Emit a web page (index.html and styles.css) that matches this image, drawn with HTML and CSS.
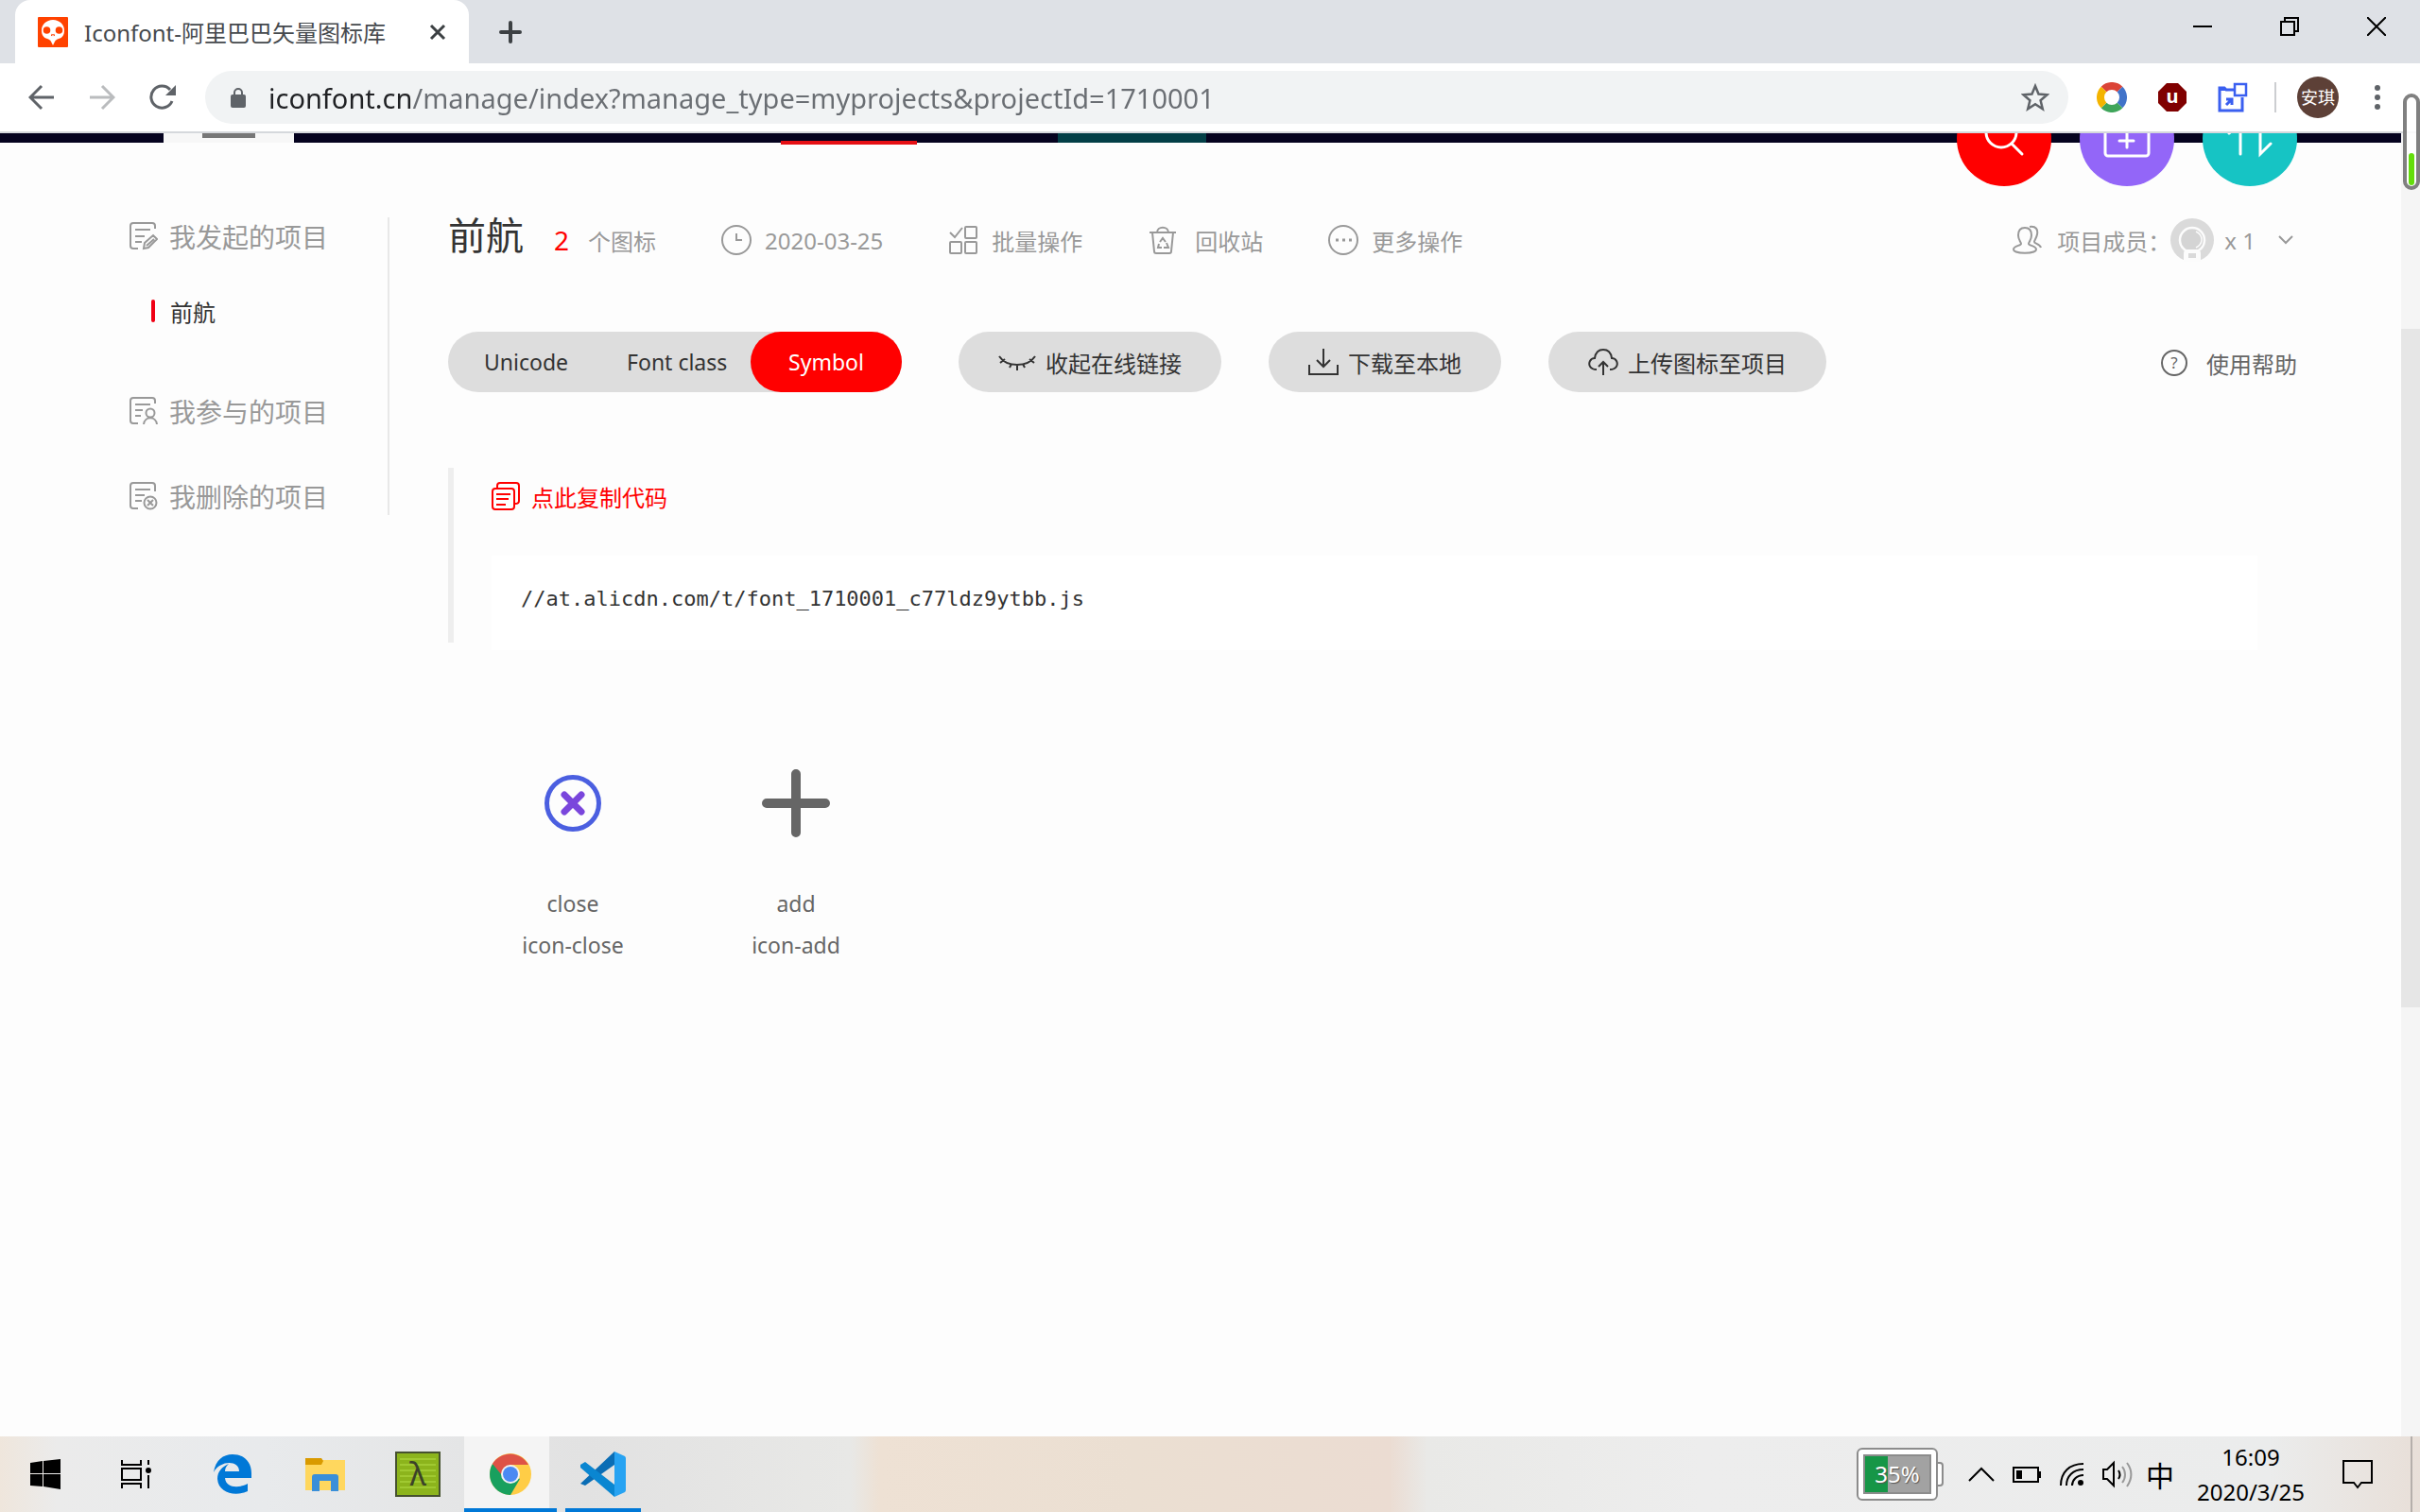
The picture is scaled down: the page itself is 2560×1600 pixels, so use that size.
FILE: index.html
```html
<!DOCTYPE html>
<html lang="zh-CN">
<head>
    <meta charset="UTF-8">
    <title>Iconfont-阿里巴巴矢量图标库</title>
    <link rel="stylesheet" href="styles.css">
</head>
<body>
    <!-- Browser tabs -->
    <div class="tab-strip">
        <div class="tab">
            <svg class="favicon" viewBox="0 0 32 32">
                <rect width="32" height="32" rx="1" fill="#ff4200"/>
                <path d="M16 3C9 3 4 8 4 14c0 5 2 8 6 9 2 1 3 1 4 3l2 4 2-4c1-2 2-2 4-3 4-1 6-4 6-9 0-6-5-11-12-11z" fill="#fff"/>
                <circle cx="9.500" cy="14" r="3.800" fill="#ff4200"/>
                <circle cx="22.500" cy="14" r="3.800" fill="#ff4200"/>
                <path d="M14.500 20l.8-2M17.500 20l-.8-2" stroke="#ff4200" stroke-width="1.300"/>
            </svg>
            <span class="tab-title">Iconfont-阿里巴巴矢量图标库</span>
            <button class="tab-close" aria-label="关闭标签页">
                <svg viewBox="0 0 18 18"><path d="M2 2l14 14M16 2L2 16" stroke="#3c4043" stroke-width="3"/></svg>
            </button>
        </div>
        <button class="new-tab" aria-label="新标签页">
            <svg viewBox="0 0 24 24"><path d="M12 2v20M2 12h20" stroke="#3c4043" stroke-width="4" stroke-linecap="round"/></svg>
        </button>
        <div class="window-controls">
            <button aria-label="最小化"><svg viewBox="0 0 20 20"><path d="M0 10h20" stroke="#000" stroke-width="2"/></svg></button>
            <button aria-label="还原"><svg viewBox="0 0 20 20"><path d="M1 5h14v14H1zM5 5V1h14v14h-4" fill="none" stroke="#000" stroke-width="2"/></svg></button>
            <button aria-label="关闭"><svg viewBox="0 0 20 20"><path d="M0 0l20 20M20 0L0 20" stroke="#000" stroke-width="2"/></svg></button>
        </div>
    </div>

    <!-- Address bar -->
    <div class="toolbar">
        <div class="nav-buttons">
            <button aria-label="后退"><svg viewBox="0 0 28 28"><path d="M27 14H3M14 2L2 14l12 12" fill="none" stroke="#5f6368" stroke-width="3"/></svg></button>
            <button aria-label="前进"><svg viewBox="0 0 28 28"><path d="M1 14h24M14 2l12 12-12 12" fill="none" stroke="#babcbe" stroke-width="3"/></svg></button>
            <button aria-label="重新加载"><svg viewBox="0 0 28 28"><path d="M24 18A11.500 11.500 0 1 1 22 6" fill="none" stroke="#5f6368" stroke-width="3"/><path d="M28 1v11H17z" fill="#5f6368"/></svg></button>
        </div>
        <div class="address">
            <svg class="lock" viewBox="0 0 16 22"><rect y="8" width="16" height="14" rx="2" fill="#5f6368"/><path d="M4 9V6a4 4 0 0 1 8 0v3" fill="none" stroke="#5f6368" stroke-width="2"/></svg>
            <input class="url" type="text" aria-label="地址栏" spellcheck="false" value="iconfont.cn/manage/index?manage_type=myprojects&amp;projectId=1710001">
            <button class="star" aria-label="收藏"><svg viewBox="0 0 30 30"><path d="M15 3l3.500 8.500 9 .7-6.900 6 2.200 9L15 22.300 7.200 27.200l2.200-9-6.900-6 9-.7z" fill="none" stroke="#5f6368" stroke-width="2.500"/></svg></button>
        </div>
        <div class="extensions">
            <button aria-label="扩展程序">
                <svg viewBox="0 0 32 32" fill="none" stroke-width="8">
                    <path d="M7.500 7.500a12 12 0 0 1 17 0" stroke="#db4437"/>
                    <path d="M24.500 7.500a12 12 0 0 1 0 17" stroke="#4173c9"/>
                    <path d="M24.500 24.500a12 12 0 0 1-17 0" stroke="#3fa55a"/>
                    <path d="M7.500 24.500a12 12 0 0 1 0-17" stroke="#f4b400"/>
                </svg>
            </button>
            <button class="ublock" aria-label="uBlock">
                <svg viewBox="0 0 32 32"><path d="M10 1h12l9 9v12l-9 9H10l-9-9V10z" fill="#800000"/><text x="16" y="22" text-anchor="middle">u</text></svg>
            </button>
            <button aria-label="打开窗口">
                <svg viewBox="0 0 32 32"><path d="M17 8H9L7 6H2v24h24V16" fill="none" stroke="#3a5ff0" stroke-width="3"/><path d="M1 6h7l2 3H1z" fill="#3a5ff0"/><path d="M18 2h12v12H18z" fill="#fff" stroke="#3a5ff0" stroke-width="2.500"/><path d="M9 24l6-6M9 18h6v6" fill="none" stroke="#3a5ff0" stroke-width="3"/></svg>
            </button>
        </div>
        <div class="divider"></div>
        <button class="profile">安琪</button>
        <button class="menu" aria-label="菜单"><svg viewBox="0 0 6 28" fill="#5f6368"><circle cx="3" cy="4" r="3"/><circle cx="3" cy="14" r="3"/><circle cx="3" cy="24" r="3"/></svg></button>
    </div>

    <!-- Page -->
    <div class="viewport">
        <div class="banner">
            <span class="banner-search"></span>
            <span class="banner-active"></span>
            <span class="banner-teal"></span>
        </div>
        <div class="round-actions">
            <button class="round red" aria-label="搜索"><svg viewBox="0 0 100 100"><circle cx="47" cy="43" r="16"/><path d="M58 55l11 11"/></svg></button>
            <button class="round purple" aria-label="新建项目"><svg viewBox="0 0 100 100"><rect x="27" y="28" width="46" height="40" rx="3"/><path d="M50 44v15M42 52h15"/></svg></button>
            <button class="round teal" aria-label="排序"><svg viewBox="0 0 100 100"><path d="M28 44l12-10v32M61 34v32l11-11"/></svg></button>
        </div>

        <div class="content">
            <nav class="sidebar">
                <a class="side-item" href="#">
                    <svg viewBox="0 0 30 30"><path d="M9 28H4a3 3 0 0 1-3-3V4a3 3 0 0 1 3-3h20a3 3 0 0 1 3 3v3M6 8h16M6 15h10M6 21h7M15 28l1-6 9-8 4 4-9 9zM18 25l8-7"/></svg>
                    我发起的项目
                </a>
                <a class="sub-item" href="#">前航</a>
                <a class="side-item joined" href="#">
                    <svg viewBox="0 0 30 30"><path d="M9 28H4a3 3 0 0 1-3-3V4a3 3 0 0 1 3-3h20a3 3 0 0 1 3 3v3M6 8h16M6 14h8M6 20h6"/><circle cx="22" cy="17" r="4.500"/><path d="M15 29c1-9 13-9 14 0"/></svg>
                    我参与的项目
                </a>
                <a class="side-item" href="#">
                    <svg viewBox="0 0 30 30"><path d="M9 28H4a3 3 0 0 1-3-3V4a3 3 0 0 1 3-3h20a3 3 0 0 1 3 3v6M6 8h16M6 14h10M6 20h7"/><circle cx="22" cy="22" r="6.500"/><path d="M19 19l6 6M25 19l-6 6"/></svg>
                    我删除的项目
                </a>
            </nav>

            <main class="main">
                <div class="project-head">
                    <h1>前航</h1>
                    <span class="count">2</span>
                    <span class="count-label">个图标</span>
                    <span class="meta date">
                        <svg viewBox="0 0 32 32"><circle cx="16" cy="16" r="15"/><path d="M16 9v7h6"/></svg>
                        2020-03-25
                    </span>
                    <button class="meta batch">
                        <svg viewBox="0 0 32 32"><rect x="18" y="2" width="12" height="12" rx="1"/><rect x="2" y="18" width="12" height="12" rx="1"/><rect x="18" y="18" width="12" height="12" rx="1"/><path d="M2 8l5 5 8-10"/></svg>
                        批量操作
                    </button>
                    <button class="meta recycle">
                        <svg viewBox="0 0 32 32"><path d="M2 8h28M10 8c0-7 12-7 12 0M5 8l2 20c0 1 1 2 2 2h14c1 0 2-1 2-2l2-20M13 18l3-4 3 4M12 20l-1 4h4M20 19l2 5h-5"/></svg>
                        回收站
                    </button>
                    <button class="meta more">
                        <svg viewBox="0 0 32 32"><circle cx="16" cy="16" r="15"/><path d="M8 16h3M15 16h3M22 16h3" stroke-width="3"/></svg>
                        更多操作
                    </button>
                    <button class="meta members">
                        <svg viewBox="0 0 32 32"><path d="M10 20c0-2-3-4-3-9 0-5 2-8 7-8s7 3 7 8c0 5-3 7-3 9s8 2 8 6c0 5-24 5-24 0 0-4 8-4 8-6zM19 2c7-1 9 3 8 8-1 5-3 6-3 8s6 2 7 6"/></svg>
                        项目成员：
                    </button>
                    <svg class="avatar" viewBox="0 0 46 46">
                        <circle cx="23" cy="23" r="23" fill="#dadada"/>
                        <circle cx="23" cy="23" r="13" fill="#d4d4d4" stroke="#fcfcfc" stroke-width="2.500"/>
                        <path d="M27 14c8 4 8 13 0 17" fill="none" stroke="#fcfcfc" stroke-width="1.500"/>
                        <path d="M14 46V37c0-3 2-4 4-4h10c2 0 4 1 4 4v9z" fill="#fcfcfc"/>
                        <rect x="19" y="37" width="8" height="5" fill="#dadada"/>
                    </svg>
                    <span class="member-count">x 1</span>
                    <svg class="chevron" viewBox="0 0 16 10"><path d="M1 1l7 7 7-7"/></svg>
                </div>

                <div class="project-actions">
                    <div class="code-types">
                        <button>Unicode</button>
                        <button>Font class</button>
                        <button class="active">Symbol</button>
                    </div>
                    <button class="pill">
                        <svg class="eye" viewBox="0 0 40 30"><path d="M1 9c8 12 30 12 38 0M2 16l5-4M12 21l2-4M20 24v-6M28 21l-2-4M38 16l-5-4"/></svg>
                        收起在线链接
                    </button>
                    <button class="pill">
                        <svg viewBox="0 0 32 32"><path d="M16 2v19M9 14l7 7 7-7M1 19v10h30V19"/></svg>
                        下载至本地
                    </button>
                    <button class="pill">
                        <svg viewBox="0 0 32 32"><path d="M9 24C2 24 0 19 2 15c1-2 3-3 5-3C8 5 12 3 16 3s8 2 9 9c2 0 4 1 5 3 2 4 0 9-7 9M16 30V16M11 21l5-5 5 5"/></svg>
                        上传图标至项目
                    </button>
                    <a class="help" href="#">
                        <svg viewBox="0 0 28 28"><circle cx="14" cy="14" r="13"/><text x="14" y="20" text-anchor="middle">?</text></svg>
                        使用帮助
                    </a>
                </div>

                <section class="code-block">
                    <button class="copy">
                        <svg viewBox="0 0 30 30"><path d="M6 7V4c0-2 1-3 3-3h17c2 0 3 1 3 3v16c0 2-1 3-4 3"/><rect x="1" y="7" width="23" height="22" rx="3"/><path d="M5 13h15M5 18h13M5 24h10"/></svg>
                        点此复制代码
                    </button>
                    <pre class="code">//at.alicdn.com/t/font_1710001_c77ldz9ytbb.js</pre>
                </section>

                <ul class="icon-list">
                    <li>
                        <svg viewBox="0 0 72 72" fill="none"><circle cx="36" cy="36" r="27.500" stroke="#4b5fe0" stroke-width="5"/><path d="M27 27l18 18M45 27L27 45" stroke="#7a46dc" stroke-width="7" stroke-linecap="round"/></svg>
                        <span>close</span>
                        <span>icon-close</span>
                    </li>
                    <li>
                        <svg viewBox="0 0 72 72"><path d="M36 5v62M5 36h62" stroke="#666" stroke-width="10" stroke-linecap="round"/></svg>
                        <span>add</span>
                        <span>icon-add</span>
                    </li>
                </ul>
            </main>
        </div>

        <div class="scrollbar"><div class="thumb"></div></div>
    </div>

    <div class="gauge"><div class="gauge-level"></div></div>

    <!-- Taskbar -->
    <div class="taskbar">
        <div class="system-tasks">
            <button class="task" aria-label="开始"><svg viewBox="0 0 32 32"><path d="M0 4l13-2v13H0zM14 2l18-2v15H14zM0 16h13v13L0 28zM14 16h18v16l-18-3z"/></svg></button>
            <button class="task" aria-label="任务视图"><svg viewBox="0 0 32 32" fill="none" stroke="#000" stroke-width="2"><path d="M1 1v5h20V1M1 10h20v12H1zM1 31v-5h20v5M29 1v5M29 17v14"/><circle cx="29" cy="12" r="2" fill="#000"/></svg></button>
        </div>
        <button class="task" aria-label="Edge"><svg class="big" viewBox="0 0 48 48"><path d="M4 22C6 9 14 3 24 3c13 0 20 9 20 20v5H16c1 11 15 11 24 6v8c-13 6-31 2-32-13C8 21 13 16 20 13c-3 3-4 5-4 8h15c0-12-20-12-27 1z" fill="#0078d7"/></svg></button>
        <button class="task" aria-label="文件资源管理器"><svg class="big" viewBox="0 0 48 48"><path d="M3 9h42v32H3z" fill="#ffd75e"/><path d="M3 7h17l2 3-2 4H3z" fill="#d99a00"/><path d="M10 42V27c0-2 1-3 3-3h22c2 0 3 1 3 3v15h-8V31H18v11z" fill="#3a8fd9"/></svg></button>
        <button class="task" aria-label="Cmder"><svg class="big" viewBox="0 0 48 48"><rect x="1" y="1" width="46" height="46" fill="#8cb41c" stroke="#46512f" stroke-width="2"/><path d="M5 8h38M5 14h38M5 20h38M5 26h38M5 32h38M5 38h38" stroke="#a6d038" stroke-width="1.500"/><text x="24" y="36" text-anchor="middle">λ</text></svg></button>
        <button class="task active" aria-label="Chrome">
            <svg class="big" viewBox="0 0 48 48">
                <circle cx="24" cy="24" r="22" fill="#ffcd46"/>
                <path d="M5 13a22 22 0 0 0 19 33l10-17-10-5z" fill="#18a05e"/>
                <path d="M5 13a22 22 0 0 1 38 1H24l-10 10z" fill="#de5246"/>
                <circle cx="24" cy="24" r="10" fill="#f1f1f1"/>
                <circle cx="24" cy="24" r="8" fill="#4a89f3"/>
            </svg>
        </button>
        <button class="task running" aria-label="Visual Studio Code">
            <svg class="big" viewBox="0 0 48 48">
                <path d="M0 34L36 0v14L5 36z" fill="#0a6db5"/>
                <path d="M0 14l5-3 31 24v13L0 17z" fill="#0a86d1"/>
                <path d="M36 0l11 5c1 1 1 2 1 3v32c0 1 0 2-1 3l-11 5z" fill="#27a3f2"/>
            </svg>
        </button>

        <div class="tray">
            <div class="battery-widget"><div class="battery-body"><div class="battery-fill"><span>35%</span></div></div><div class="battery-tip"></div></div>
            <button aria-label="显示隐藏的图标"><svg viewBox="0 0 32 32"><path d="M3 23l13-13 13 13"/></svg></button>
            <button aria-label="电池"><svg viewBox="0 0 32 32"><path d="M2 9h26v15H2zM30 13v7"/><path d="M5 12h6v9H5z" fill="#000" stroke="none"/></svg></button>
            <button aria-label="网络"><svg viewBox="0 0 32 32"><path d="M4 28C4 14 13 5 28 5M10 28c0-10 7-17 18-17M16 28c0-6 5-11 12-11"/><circle cx="25" cy="25" r="2" fill="#000"/></svg></button>
            <button aria-label="音量"><svg viewBox="0 0 32 32"><path d="M1 11h4l7-7v24l-7-7H1zM17 12c2 3 2 6 0 9"/><path d="M21 8c4 5 4 12 0 17M26 4c6 8 6 16 0 25" stroke="#999"/></svg></button>
            <button class="ime">中</button>
            <div class="clock"><span>16:09</span><span>2020/3/25</span></div>
            <button class="notice" aria-label="通知"><svg viewBox="0 0 32 32"><path d="M1 2h30v23H20l-4 5-4-5H1z"/></svg></button>
        </div>
    </div>
</body>
</html>
```
FILE: styles.css
```css
* {
    margin: 0;
    padding: 0;
    box-sizing: border-box;
}

body {
    font-family: "Noto Sans", "Noto Sans CJK SC", sans-serif;
    font-size: 24px;
    height: 100vh;
    display: flex;
    flex-direction: column;
    overflow: hidden;
    position: relative;
    background: #fdfdfd;
    color: #333;
}

button {
    font: inherit;
    color: inherit;
    background: none;
    border: none;
    cursor: pointer;
}

a {
    color: inherit;
    text-decoration: none;
}

svg {
    display: block;
    flex-shrink: 0;
}

/* Tabs */
.tab-strip {
    height: 67px;
    flex-shrink: 0;
    display: flex;
    align-items: stretch;
    padding-left: 16px;
    background: #dee1e6;
}

.tab {
    width: 480px;
    display: flex;
    align-items: center;
    padding: 0 24px;
    background: #fff;
    border-radius: 16px 16px 0 0;
}

.favicon {
    width: 32px;
    height: 32px;
}

.tab-title {
    flex: 1;
    margin-left: 17px;
    color: #45494d;
    white-space: nowrap;
}

.tab-close svg {
    width: 18px;
    height: 18px;
}

.new-tab {
    width: 88px;
    display: flex;
    align-items: center;
    justify-content: center;
}

.new-tab svg {
    width: 24px;
    height: 24px;
}

.window-controls {
    margin-left: auto;
    height: 56px;
    display: flex;
}

.window-controls button {
    width: 92px;
    display: flex;
    align-items: center;
    justify-content: center;
}

.window-controls svg {
    width: 20px;
    height: 20px;
}

/* Address bar */
.toolbar {
    height: 74px;
    flex-shrink: 0;
    display: flex;
    align-items: center;
    padding: 0 22px 0 12px;
    background: #fff;
    border-bottom: 2px solid #d5d8dc;
}

.nav-buttons,
.extensions {
    display: flex;
}

.nav-buttons button,
.extensions button {
    width: 64px;
    height: 56px;
    display: flex;
    align-items: center;
    justify-content: center;
}

.nav-buttons svg {
    width: 28px;
    height: 28px;
}

.extensions svg {
    width: 32px;
    height: 32px;
}

.ublock text {
    font-size: 20px;
    font-weight: bold;
    fill: #fff;
}

.address {
    flex: 1;
    height: 56px;
    margin: 0 14px 0 13px;
    padding: 0 20px 0 27px;
    display: flex;
    align-items: center;
    border-radius: 28px;
    background: #f1f3f4;
}

.lock {
    width: 16px;
    height: 22px;
}

.url {
    flex: 1;
    height: 48px;
    margin-left: 24px;
    border: none;
    outline: none;
    font: inherit;
    font-size: 29px;
    /* host is darker than the rest of the address */
    background: linear-gradient(to right, #202124 152px, #6a6e73 152px);
    -webkit-background-clip: text;
    background-clip: text;
    -webkit-text-fill-color: transparent;
}

.star svg {
    width: 30px;
    height: 30px;
}

.divider {
    width: 2px;
    height: 32px;
    margin: 0 22px 0 12px;
    background: #ccced1;
}

.profile {
    width: 44px;
    height: 44px;
    border-radius: 50%;
    background: #5d4037;
    color: #fff;
    font-size: 18px;
    line-height: 44px;
    white-space: nowrap;
}

.menu {
    width: 46px;
    margin-left: 18px;
    display: flex;
    justify-content: center;
}

.menu svg {
    width: 6px;
    height: 28px;
}

/* Page */
.viewport {
    flex: 1;
    position: relative;
    overflow: hidden;
    padding-right: 20px;
}

.banner {
    height: 10px;
    display: flex;
    align-items: flex-start;
    padding-left: 173px;
    background: #05031f;
}

.banner-search {
    width: 138px;
    height: 10px;
    background: linear-gradient(#777, #777) center top / 56px 5px no-repeat #f7f7f7;
}

.banner-active {
    width: 144px;
    height: 4px;
    margin: 8px 149px 0 515px;
    background: #e60f14;
}

.banner-teal {
    width: 157px;
    height: 10px;
    background: #033f47;
}

.round-actions {
    position: absolute;
    top: -44px;
    right: 130px;
    display: flex;
    gap: 30px;
}

.round {
    width: 100px;
    height: 100px;
    border-radius: 50%;
}

.round svg {
    fill: none;
    stroke: #fff;
    stroke-width: 3;
    stroke-linecap: round;
}

.red {
    background: #ff0000;
}

.purple {
    background: #9366f8;
}

.teal {
    background: #16c4c4;
}

.content {
    display: flex;
    align-items: flex-start;
    padding: 79px 110px 0 137px;
}

.sidebar {
    width: 275px;
    margin-right: 62px;
    display: flex;
    flex-direction: column;
    border-right: 2px solid #e8e8e8;
    font-size: 28px;
    color: #999;
}

.side-item {
    height: 40px;
    display: flex;
    align-items: center;
    gap: 12px;
    margin-bottom: 50px;
}

.side-item:first-child {
    margin-bottom: 39px;
}

.side-item:last-child {
    margin-bottom: 0;
}

.side-item svg {
    width: 30px;
    height: 30px;
}

.sidebar svg,
.meta svg,
.chevron,
.pill svg,
.help svg,
.copy svg {
    fill: none;
    stroke: currentColor;
    stroke-width: 2;
}

.sub-item {
    height: 40px;
    margin-bottom: 66px;
    padding-left: 23px;
    display: flex;
    align-items: center;
    font-size: 24px;
    color: #333;
}

.sub-item::before {
    content: "";
    width: 4px;
    height: 24px;
    margin-right: 16px;
    border-radius: 2px;
    background: #f00014;
}

.main {
    flex: 1;
}

.project-head {
    height: 48px;
    display: flex;
    align-items: center;
    color: #999;
}

.project-head h1 {
    font-size: 40px;
    font-weight: normal;
    line-height: 48px;
    padding-bottom: 10px;
    color: #333;
}

.count {
    margin: 0 20px 0 32px;
    font-size: 28px;
    color: #f00;
}

.meta {
    display: flex;
    align-items: center;
    gap: 14px;
    white-space: nowrap;
}

.meta svg {
    width: 32px;
    height: 32px;
}

.date,
.batch,
.recycle,
.more {
    margin-left: 69px;
}

.recycle {
    gap: 18px;
}

.members {
    gap: 16px;
    margin-left: auto;
}

.avatar {
    width: 46px;
    height: 46px;
}

.member-count {
    margin: 0 24px 0 11px;
}

.chevron {
    width: 16px;
    height: 10px;
    margin-right: 4px;
}

.project-actions {
    display: flex;
    align-items: center;
    margin-top: 73px;
}

.code-types {
    width: 480px;
    height: 64px;
    display: flex;
    gap: 62px;
    margin-right: 60px;
    padding-left: 38px;
    border-radius: 32px;
    background: #ddd;
    font-size: 23px;
}

.code-types button {
    white-space: nowrap;
}

.code-types .active {
    width: 160px;
    margin-left: auto;
    border-radius: 32px;
    background: #f00;
    color: #fff;
}

/* the active tab sits tight against its neighbour */
.code-types button:nth-child(2) {
    margin-right: -62px;
}

.pill {
    height: 64px;
    display: flex;
    align-items: center;
    gap: 10px;
    margin-right: 50px;
    padding: 0 42px;
    border-radius: 32px;
    background: #ddd;
    white-space: nowrap;
}

.pill svg {
    width: 32px;
    height: 32px;
}

.pill .eye {
    width: 40px;
    height: 30px;
}

.help {
    margin-left: auto;
    display: flex;
    align-items: center;
    gap: 20px;
    padding-top: 2px;
    color: #666;
}

.help svg {
    width: 28px;
    height: 28px;
}

.help text {
    font-size: 17px;
    fill: #666;
    stroke: none;
}

.code-block {
    height: 185px;
    margin-top: 80px;
    padding: 10px 42px 0 40px;
    border-left: 6px solid #eee;
}

.copy {
    height: 40px;
    display: flex;
    align-items: center;
    gap: 12px;
    color: #f00;
}

.copy svg {
    width: 30px;
    height: 30px;
}

.code {
    height: 100px;
    margin-top: 43px;
    padding-left: 31px;
    background: #fff;
    font-family: "DejaVu Sans Mono", "Liberation Mono", monospace;
    font-size: 22px;
    line-height: 92px;
}

.icon-list {
    display: flex;
    list-style: none;
    padding: 134px 0 0 14px;
    font-size: 23px;
    color: #666;
}

.icon-list li {
    width: 236px;
    display: flex;
    flex-direction: column;
    align-items: center;
    line-height: 44px;
}

.icon-list svg {
    width: 72px;
    height: 72px;
    margin-bottom: 48px;
}

.scrollbar {
    position: absolute;
    top: 0;
    right: 0;
    width: 20px;
    height: 100%;
    padding-top: 207px;
    background: #f5f5f5;
}

.thumb {
    height: 718px;
    background: #e6e6e6;
}

/* Green level meter floating on the right edge */
.gauge {
    position: absolute;
    top: 99px;
    right: 0;
    width: 18px;
    height: 102px;
    padding: 0 2px 1px;
    display: flex;
    align-items: flex-end;
    border: 4px solid #808080;
    border-radius: 9px;
    background: rgba(255, 255, 255, 0.85);
}

.gauge-level {
    width: 6px;
    height: 34px;
    border-radius: 3px;
    background: #63dd0b;
}

/* Taskbar */
.taskbar {
    height: 80px;
    flex-shrink: 0;
    display: flex;
    background: linear-gradient(to right, #efe6dc 0, #ebebeb 60px, #e8eaec 280px, #e2e2e2 620px, #e8e8e6 900px, #eee1d4 930px, #ebdfd2 1200px, #ebdcd2 1470px, #e9e9e7 1510px, #ededed 1800px, #ebecec 2400px, #e8dfd8 2560px);
}

.system-tasks {
    display: flex;
    margin-right: 5px;
}

.task {
    width: 98px;
    display: flex;
    align-items: center;
    justify-content: center;
}

.system-tasks .task {
    width: 96px;
}

.task svg {
    width: 32px;
    height: 32px;
}

.task .big {
    width: 48px;
    height: 48px;
}

.task text {
    font-size: 34px;
    fill: #3b4229;
}

.task.active {
    background: linear-gradient(#f4f4f4, #f4f4f4) left / 90px 100% no-repeat;
    border-bottom: 4px solid #0078d7;
    padding-top: 4px;
}

.task.running {
    width: 80px;
    margin-left: 9px;
    border-bottom: 4px solid #0078d7;
    padding-top: 4px;
}

.tray {
    margin: 0 8px 0 auto;
    display: flex;
    align-items: center;
    padding-right: 18px;
    border-right: 2px solid #b5afab;
}

.tray button {
    width: 48px;
    height: 80px;
    display: flex;
    align-items: center;
    justify-content: center;
}

.tray svg {
    width: 32px;
    height: 32px;
    fill: none;
    stroke: #000;
    stroke-width: 2;
}

.battery-widget {
    display: flex;
    align-items: center;
    margin-right: 16px;
}

.battery-body {
    width: 86px;
    height: 56px;
    padding: 5px;
    border: 2px solid #8c8c8c;
    border-radius: 6px;
    background: #fff;
}

.battery-fill {
    height: 42px;
    border: 2px solid #8c8c8c;
    background: linear-gradient(to right, #169647 35%, #a2a2a2 35%);
    color: #fff;
    line-height: 38px;
    text-align: center;
    text-shadow: 1px 1px 1px #555;
}

.battery-tip {
    width: 6px;
    height: 26px;
    border: 2px solid #8c8c8c;
    border-left: none;
    border-radius: 0 4px 4px 0;
    background: #fff;
}

.tray .ime {
    width: 42px;
    font-size: 30px;
    color: #000;
}

.clock {
    width: 150px;
    display: flex;
    flex-direction: column;
    align-items: center;
    color: #000;
    line-height: 37px;
}

.tray .notice {
    width: 76px;
}
```
